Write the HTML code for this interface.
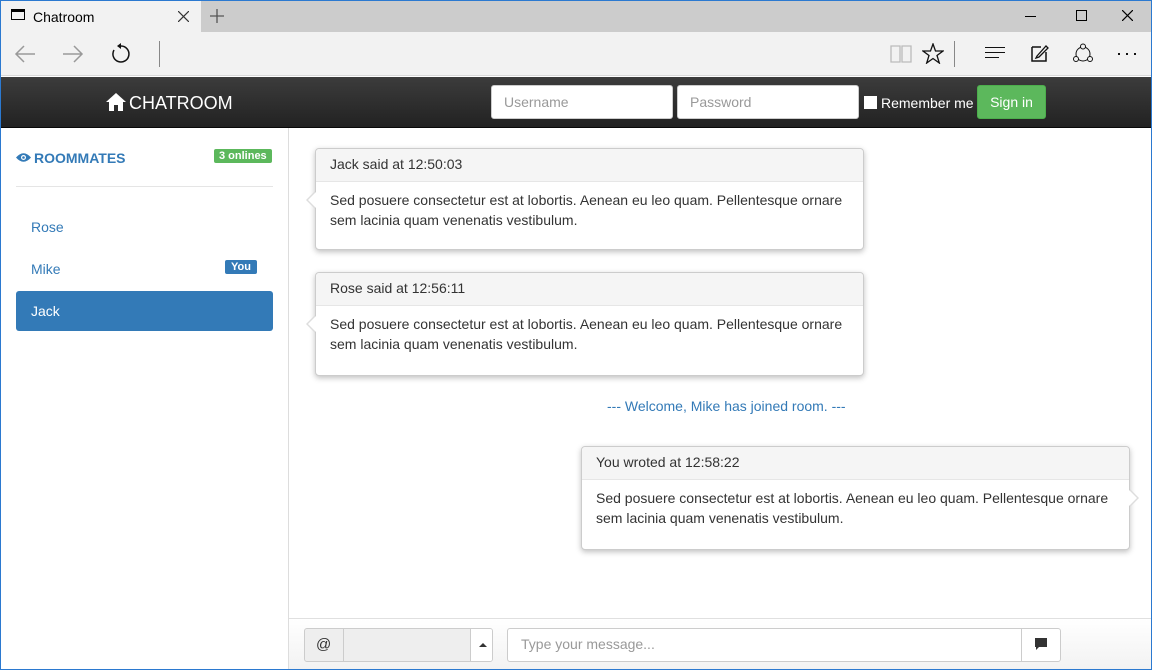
<!DOCTYPE html>
<html><head><meta charset="utf-8"><style>
*{box-sizing:border-box;margin:0;padding:0}
body{width:1152px;height:670px;overflow:hidden;font-family:"Liberation Sans",sans-serif;font-size:14px;color:#333;background:#fff;position:relative}
.frame{position:absolute;inset:0;border:1px solid #2b79d0;pointer-events:none;z-index:10}
.tabs{position:absolute;left:0;top:0;width:1152px;height:32px;background:#cccccc}
.tab{position:absolute;left:1px;top:1px;width:200px;height:31px;background:#f2f2f2;font-size:14px;color:#000}
.tool{position:absolute;left:0;top:32px;width:1152px;height:44px;background:#f2f2f2;border-bottom:1px solid #d9d9d9}
.nav{position:absolute;left:0;top:77px;width:1152px;height:51px;background:linear-gradient(#3c3c3c,#222);border-bottom:1px solid #080808}
.inp{position:absolute;top:85px;height:34px;background:#fff;border:1px solid #ccc;border-radius:3px;color:#999;padding:8px 12px;font-size:14px}
.side{position:absolute;left:0;top:128px;width:289px;height:542px;border-right:1px solid #ddd}
.item{position:absolute;left:16px;width:257px;height:40px;padding:12px 15px;color:#337ab7;font-size:14px}
.bub{position:absolute;width:549px;height:104px;border:1px solid #ccc;border-radius:4px;background:#fff;box-shadow:0 2px 6px rgba(0,0,0,.25)}
.bub .h{height:33px;background:#f5f5f5;border-bottom:1px solid #e6e6e6;padding:7px 14px;font-size:14px;border-radius:4px 4px 0 0}
.bub .b{padding:8px 14px;line-height:20px;font-size:14px}
.arrL:before{content:"";position:absolute;left:-10px;top:42px;border:9px solid transparent;border-right-color:#ddd;border-left:0}
.arrL:after{content:"";position:absolute;left:-8px;top:43px;border:8px solid transparent;border-right-color:#fff;border-left:0}
.arrR:before{content:"";position:absolute;right:-10px;top:42px;border:9px solid transparent;border-left-color:#ddd;border-right:0}
.arrR:after{content:"";position:absolute;right:-8px;top:43px;border:8px solid transparent;border-left-color:#fff;border-right:0}
.foot{position:absolute;left:289px;top:618px;width:863px;height:52px;background:linear-gradient(#fff,#f2f2f2);border-top:1px solid #e0e0e0}
</style></head><body>
<div class="tabs"><div class="tab">
<div style="position:absolute;left:10px;top:8px;width:14px;height:11px;border:1px solid #000;border-top-width:3px"></div>
<span style="position:absolute;left:32px;top:8px">Chatroom</span>
<svg style="position:absolute;left:177px;top:10px" width="11" height="11"><path d="M0 0L11 11M11 0L0 11" stroke="#333" stroke-width="1.2"/></svg></div>
<svg style="position:absolute;left:210px;top:9px" width="14" height="14"><path d="M7 0V14M0 7H14" stroke="#555" stroke-width="1.3"/></svg>
<div style="position:absolute;left:1025px;top:16px;width:11px;height:1px;background:#000"></div>
<div style="position:absolute;left:1076px;top:10px;width:11px;height:11px;border:1px solid #000"></div>
<svg style="position:absolute;left:1122px;top:10px" width="11" height="11"><path d="M0 0L11 11M11 0L0 11" stroke="#000" stroke-width="1.2"/></svg>
</div>
<div class="tool">
<svg style="position:absolute;left:14px;top:12px" width="22" height="20"><path d="M21 10H2M10 2L2 10L10 18" fill="none" stroke="#999" stroke-width="1.5"/></svg>
<svg style="position:absolute;left:62px;top:12px" width="22" height="20"><path d="M1 10H20M12 2L20 10L12 18" fill="none" stroke="#999" stroke-width="1.5"/></svg>
<svg style="position:absolute;left:110px;top:11px" width="22" height="22"><path d="M11 3A8 8 0 1 1 4 7" fill="none" stroke="#111" stroke-width="1.5"/><path d="M11 0L11 6L7 3Z" fill="#111"/></svg>
<div style="position:absolute;left:159px;top:9px;width:1px;height:26px;background:#888"></div>
<svg style="position:absolute;left:890px;top:13px" width="22" height="18"><path d="M1 1H10V17H1ZM12 1H21V17H12Z" fill="none" stroke="#bbb" stroke-width="1.3"/></svg>
<svg style="position:absolute;left:922px;top:11px" width="22" height="21"><path d="M11 1L13.5 8H21L15 12.5L17.3 20L11 15.5L4.7 20L7 12.5L1 8H8.5Z" fill="none" stroke="#111" stroke-width="1.3"/></svg>
<div style="position:absolute;left:954px;top:9px;width:1px;height:26px;background:#888"></div>
<div style="position:absolute;left:985px;top:15px;width:20px;border-top:1px solid #111"></div>
<div style="position:absolute;left:985px;top:20px;width:20px;border-top:1px solid #111"></div>
<div style="position:absolute;left:985px;top:25px;width:14px;border-top:1px solid #111"></div>
<svg style="position:absolute;left:1031px;top:12px" width="18" height="18"><path d="M1 3V17H15V8" fill="none" stroke="#111" stroke-width="1.5"/><path d="M1 3H10" stroke="#111" stroke-width="1.5"/><path d="M6 12L15 2L17 4L8 13L5 14Z" fill="none" stroke="#111" stroke-width="1.3"/></svg>
<svg style="position:absolute;left:1072px;top:11px" width="22" height="22"><circle cx="11" cy="11" r="7" fill="none" stroke="#111"/><circle cx="11" cy="3.5" r="2.5" fill="#f2f2f2" stroke="#111"/><circle cx="4" cy="16" r="2.5" fill="#f2f2f2" stroke="#111"/><circle cx="18" cy="16" r="2.5" fill="#f2f2f2" stroke="#111"/></svg>
<div style="position:absolute;left:1118px;top:21px;width:2px;height:2px;background:#111;box-shadow:8px 0 #111,16px 0 #111"></div>
</div>
<div class="nav">
<svg style="position:absolute;left:106px;top:16px" width="20" height="18" viewBox="0 0 20 18"><path d="M10 0 L20 9 L17 9 L17 18 L12 18 L12 12 L8 12 L8 18 L3 18 L3 9 L0 9Z" fill="#fff"/></svg>
<span style="position:absolute;left:129px;top:16px;color:#fff;font-size:18px">CHATROOM</span>
<label style="position:absolute;left:864px;top:18px;color:#fff;font-size:14px;white-space:nowrap"><span style="display:inline-block;width:13px;height:13px;background:#fff;vertical-align:-1px;margin-right:4px"></span>Remember me</label>
<div style="position:absolute;left:977px;top:8px;width:69px;height:34px;background:#5cb85c;border:1px solid #4cae4c;border-radius:3px;color:#fff;padding:8px 0;text-align:center;white-space:nowrap">Sign in</div>
</div>
<div class="inp" style="left:491px;width:182px">Username</div>
<div class="inp" style="left:677px;width:182px">Password</div>
<div class="side">
<svg style="position:absolute;left:16px;top:24px" width="15" height="11" viewBox="0 0 15 11"><path d="M0 5.5 Q7.5 -3 15 5.5 Q7.5 14 0 5.5Z" fill="#337ab7"/><circle cx="7.5" cy="5.5" r="2.5" fill="#fff"/><circle cx="7.5" cy="5.5" r="1.3" fill="#337ab7"/></svg>
<span style="position:absolute;left:34px;top:22px;color:#337ab7;font-weight:bold;font-size:14px">ROOMMATES</span>
<span style="position:absolute;left:214px;top:21px;background:#5cb85c;color:#fff;font-weight:bold;font-size:11px;padding:1px 5px;border-radius:2px">3 onlines</span>
<div style="position:absolute;left:16px;top:58px;width:257px;border-top:1px solid #e5e5e5"></div>
<div class="item" style="top:79px">Rose</div>
<div class="item" style="top:121px">Mike<span style="position:absolute;right:16px;top:11px;background:#337ab7;color:#fff;font-size:11px;font-weight:bold;padding:1px 6px;border-radius:2px">You</span></div>
<div class="item" style="top:163px;background:#337ab7;color:#fff;border-radius:3px">Jack</div>
</div>
<div class="bub arrL" style="left:315px;top:148px;height:102px"><div class="h">Jack said at 12:50:03</div><div class="b">Sed posuere consectetur est at lobortis. Aenean eu leo quam. Pellentesque ornare sem lacinia quam venenatis vestibulum.</div></div>
<div class="bub arrL" style="left:315px;top:272px"><div class="h">Rose said at 12:56:11</div><div class="b">Sed posuere consectetur est at lobortis. Aenean eu leo quam. Pellentesque ornare sem lacinia quam venenatis vestibulum.</div></div>
<div style="position:absolute;left:607px;top:398px;color:#337ab7">--- Welcome, Mike has joined room. ---</div>
<div class="bub arrR" style="left:581px;top:446px"><div class="h">You wroted at 12:58:22</div><div class="b">Sed posuere consectetur est at lobortis. Aenean eu leo quam. Pellentesque ornare sem lacinia quam venenatis vestibulum.</div></div>
<div class="foot">
<div style="position:absolute;left:15px;top:9px;width:189px;height:34px;border:1px solid #ccc;border-radius:3px;background:#eee;overflow:hidden">
<span style="position:absolute;left:11px;top:7px;font-size:15px">@</span>
<div style="position:absolute;left:38px;top:0;height:34px;border-left:1px solid #ccc"></div>
<div style="position:absolute;left:165px;top:0;width:24px;height:34px;background:#fff;border-left:1px solid #ccc"><div style="position:absolute;left:8px;top:14px;border:4px solid transparent;border-bottom-color:#333;border-top:0"></div></div>
</div>
<div style="position:absolute;left:218px;top:9px;width:554px;height:34px;border:1px solid #ccc;border-radius:3px;background:#fff;color:#999;padding:7px 13px">Type your message...
<div style="position:absolute;right:0;top:0;width:39px;height:32px;border-left:1px solid #ccc"><svg style="position:absolute;left:12px;top:9px" width="14" height="14"><path d="M1 0H13V9H5L2 12V9H1Z" fill="#333"/></svg></div></div>
</div>
<div class="frame"></div>
</body></html>
